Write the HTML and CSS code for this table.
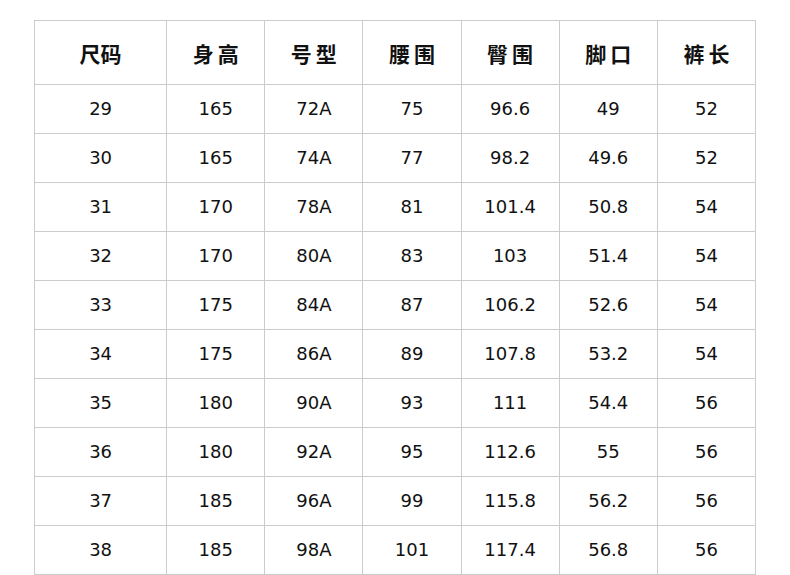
FILE: index.html
```html
<!DOCTYPE html>
<html lang="zh">
<head>
<meta charset="utf-8">
<title>尺码表</title>
<link rel="stylesheet" href="styles.css">
</head>
<body>
<table class="size-table">
  <colgroup>
    <col class="c-first"><col class="c"><col class="c"><col class="c"><col class="c"><col class="c"><col class="c">
  </colgroup>
  <thead>
    <tr><th>尺码</th><th class="sp">身高</th><th class="sp">号型</th><th class="sp">腰围</th><th class="sp">臀围</th><th class="sp">脚口</th><th class="sp">裤长</th></tr>
  </thead>
  <tbody>
    <tr><td>29</td><td>165</td><td>72A</td><td>75</td><td>96.6</td><td>49</td><td>52</td></tr>
    <tr><td>30</td><td>165</td><td>74A</td><td>77</td><td>98.2</td><td>49.6</td><td>52</td></tr>
    <tr><td>31</td><td>170</td><td>78A</td><td>81</td><td>101.4</td><td>50.8</td><td>54</td></tr>
    <tr><td>32</td><td>170</td><td>80A</td><td>83</td><td>103</td><td>51.4</td><td>54</td></tr>
    <tr><td>33</td><td>175</td><td>84A</td><td>87</td><td>106.2</td><td>52.6</td><td>54</td></tr>
    <tr><td>34</td><td>175</td><td>86A</td><td>89</td><td>107.8</td><td>53.2</td><td>54</td></tr>
    <tr><td>35</td><td>180</td><td>90A</td><td>93</td><td>111</td><td>54.4</td><td>56</td></tr>
    <tr><td>36</td><td>180</td><td>92A</td><td>95</td><td>112.6</td><td>55</td><td>56</td></tr>
    <tr><td>37</td><td>185</td><td>96A</td><td>99</td><td>115.8</td><td>56.2</td><td>56</td></tr>
    <tr><td>38</td><td>185</td><td>98A</td><td>101</td><td>117.4</td><td>56.8</td><td>56</td></tr>
  </tbody>
</table>
</body>
</html>
```

FILE: styles.css
```css
html, body {
  margin: 0;
  padding: 0;
  background: #ffffff;
}
body {
  padding: 20px 0 0 34px;
}
.size-table {
  border-collapse: collapse;
  table-layout: fixed;
  width: 722px;
  color: #111111;
  font-family: "DejaVu Sans", "Noto Sans CJK SC", sans-serif;
}
.c-first { width: 132px; }
.c { width: 98px; }
.size-table th,
.size-table td {
  border: 1px solid #cccccc;
  text-align: center;
  padding: 0;
}
.size-table th {
  height: 63px;
  font-family: "Noto Sans CJK SC", sans-serif;
  font-size: 21px;
  font-weight: 700;
}
.size-table th.sp {
  letter-spacing: 4px;
  text-indent: 4px;
}
.size-table td {
  height: 46px;
  padding-bottom: 2px;
  font-size: 18px;
  font-weight: 400;
}
```
